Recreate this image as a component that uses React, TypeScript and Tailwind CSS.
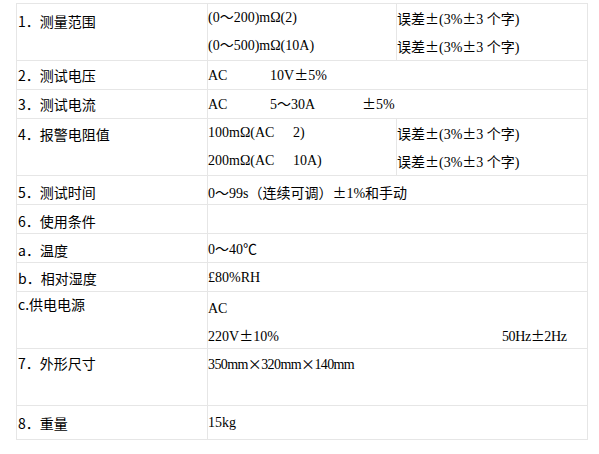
import React from "react";

const lab = "text-[14px] text-black [font-family:'Noto_Sans_CJK_SC',sans-serif]";
const val = "text-[14px] text-black whitespace-pre [font-family:'Liberation_Serif','Noto_Sans_CJK_SC',serif]";

function T({ s }: { s: string }) {
  const parts = s.split(/([±×])/);
  return (
    <>
      {parts.map((p, i) =>
        p === "±" || p === "×" ? (
          <span key={i} className="[font-family:'Noto_Sans_CJK_SC',sans-serif]">{p}</span>
        ) : (
          <React.Fragment key={i}>{p}</React.Fragment>
        )
      )}
    </>
  );
}

function Label({ children, className = "" }: { children: React.ReactNode; className?: string }) {
  return <div className={`w-[191px] shrink-0 border-r border-[#e6e6e6] pl-[1px] ${lab} ${className}`}>{children}</div>;
}

export default function App() {
  return (
    <div className="w-[599px] h-[454px] bg-white pt-[3px] pl-[16px]">
      <div className="w-[572px] border-l border-t border-[#e6e6e6]">
        {/* Row 1 */}
        <div className="flex h-[57px] border-b border-[#e6e6e6]">
          <Label className="pt-[3px] leading-[28px]">1．测量范围</Label>
          <div className={`w-[189px] shrink-0 border-r border-[#e6e6e6] flex flex-col ${val}`}>
            <div className="h-[28px] leading-[28px]">(0～200)mΩ(2)</div>
            <div className="h-[28px] leading-[28px]">(0～500)mΩ(10A)</div>
          </div>
          <div className={`w-[191px] shrink-0 border-r border-[#e6e6e6] flex flex-col ${val}`}>
            <div className="h-[28px] leading-[28px]"><T s="误差±(3%±3 个字)" /></div>
            <div className="h-[28px] leading-[28px]"><T s="误差±(3%±3 个字)" /></div>
          </div>
        </div>
        {/* Row 2 */}
        <div className="flex h-[29px] border-b border-[#e6e6e6]">
          <Label className="leading-[28px]">2．测试电压</Label>
          <div className={`flex-1 border-r border-[#e6e6e6] flex items-center ${val}`}>
            <span className="w-[62px]">AC</span>
            <span><T s="10V±5%" /></span>
          </div>
        </div>
        {/* Row 3 */}
        <div className="flex h-[29px] border-b border-[#e6e6e6]">
          <Label className="leading-[28px]">3．测试电流</Label>
          <div className={`flex-1 border-r border-[#e6e6e6] flex items-center ${val}`}>
            <span className="w-[62px]">AC</span>
            <span className="w-[92px]">5～30A</span>
            <span><T s="±5%" /></span>
          </div>
        </div>
        {/* Row 4 */}
        <div className="flex h-[57px] border-b border-[#e6e6e6]">
          <Label className="pt-[1px] leading-[28px]">4．报警电阻值</Label>
          <div className={`w-[189px] shrink-0 border-r border-[#e6e6e6] flex flex-col ${val}`}>
            <div className="h-[28px] leading-[28px] flex">
              <span className="w-[85px]">100mΩ(AC</span>
              <span>2)</span>
            </div>
            <div className="h-[28px] leading-[28px] flex">
              <span className="w-[85px]">200mΩ(AC</span>
              <span>10A)</span>
            </div>
          </div>
          <div className={`w-[191px] shrink-0 border-r border-[#e6e6e6] flex flex-col ${val}`}>
            <div className="h-[28px] leading-[28px]"><T s="误差±(3%±3 个字)" /></div>
            <div className="h-[28px] leading-[28px]"><T s="误差±(3%±3 个字)" /></div>
          </div>
        </div>
        {/* Row 5 */}
        <div className="flex h-[29px] border-b border-[#e6e6e6]">
          <Label className="pt-[2px] leading-[28px]">5．测试时间</Label>
          <div className={`flex-1 border-r border-[#e6e6e6] pt-[2px] leading-[28px] ${val}`}><T s="0～99s（连续可调）±1%和手动" /></div>
        </div>
        {/* Row 6 */}
        <div className="flex h-[29px] border-b border-[#e6e6e6]">
          <Label className="pt-[2px] leading-[28px]">6．使用条件</Label>
          <div className="flex-1 border-r border-[#e6e6e6]" />
        </div>
        {/* Row a */}
        <div className="flex h-[29px] border-b border-[#e6e6e6]">
          <Label className="pt-[2px] leading-[28px]">a．温度</Label>
          <div className={`flex-1 border-r border-[#e6e6e6] pt-[2px] leading-[28px] ${val}`}>0～40℃</div>
        </div>
        {/* Row b */}
        <div className="flex h-[29px] border-b border-[#e6e6e6]">
          <Label className="pt-[1px] leading-[28px]">b．相对湿度</Label>
          <div className={`flex-1 border-r border-[#e6e6e6] pt-[1px] leading-[28px] ${val}`}>£80%RH</div>
        </div>
        {/* Row c */}
        <div className="flex h-[57px] border-b border-[#e6e6e6]">
          <Label className="leading-[24px]">c.供电电源</Label>
          <div className={`flex-1 border-r border-[#e6e6e6] flex flex-col pt-[4px] ${val}`}>
            <div className="h-[26px] leading-[26px]">AC</div>
            <div className="h-[26px] leading-[26px] flex">
              <span className="w-[294px]"><T s="220V±10%" /></span>
              <span className="tracking-[-0.4px]"><T s="50Hz±2Hz" /></span>
            </div>
          </div>
        </div>
        {/* Row 7 */}
        <div className="flex h-[57px] border-b border-[#e6e6e6]">
          <Label className="leading-[28px]">7．外形尺寸</Label>
          <div className={`flex-1 border-r border-[#e6e6e6] leading-[28px] tracking-[-0.6px] ${val}`}><T s="350mm×320mm×140mm" /></div>
        </div>
        {/* Row 8 */}
        <div className="flex h-[34px] border-b border-[#e6e6e6]">
          <Label className="pt-[2px] leading-[30px]">8．重量</Label>
          <div className={`flex-1 border-r border-[#e6e6e6] pt-[2px] leading-[30px] ${val}`}>15kg</div>
        </div>
      </div>
    </div>
  );
}
